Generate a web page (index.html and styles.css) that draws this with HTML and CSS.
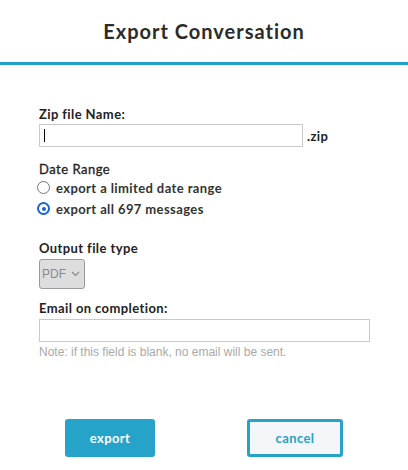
FILE: index.html
```html
<!DOCTYPE html>
<html>
<head>
<meta charset="utf-8">
<link rel="stylesheet" href="styles.css">
</head>
<body>
<div class="dialog">
  <header class="header">
    <h1 class="title">Export Conversation</h1>
  </header>
  <form class="form">
    <div class="field">
      <label class="label">Zip file Name:</label>
      <div class="zip-row">
        <div class="input zip-input"><span class="caret"></span></div>
        <span class="suffix">.zip</span>
      </div>
    </div>
    <div class="field date">
      <div class="label light">Date Range</div>
      <label class="radio-row"><span class="radio"></span>export a limited date range</label>
      <label class="radio-row"><span class="radio checked"></span>export all 697 messages</label>
    </div>
    <div class="field output">
      <div class="label">Output file type</div>
      <div class="select">
        <span>PDF</span>
        <svg class="chev" width="9" height="6" viewBox="0 0 9 6"><path d="M1 1 L4.5 4.5 L8 1" fill="none" stroke="#888" stroke-width="1.2"/></svg>
      </div>
    </div>
    <div class="field email">
      <div class="label">Email on completion:</div>
      <div class="input email-input"></div>
      <div class="note">Note: if this field is blank, no email will be sent.</div>
    </div>
  </form>
  <div class="actions">
    <button class="btn primary">export</button>
    <button class="btn secondary">cancel</button>
  </div>
</div>
</body>
</html>
```

FILE: styles.css
```css
html, body {
  margin: 0;
  padding: 0;
  background: #fff;
}
body {
  font-family: Lato, "Liberation Sans", sans-serif;
  color: #333;
  width: 408px;
  height: 470px;
  overflow: hidden;
}
.header {
  height: 62px;
  border-bottom: 3px solid #20a1cd;
  display: flex;
  align-items: center;
  justify-content: center;
}
.title {
  margin: 0;
  font-size: 20px;
  font-weight: 700;
  letter-spacing: 1px;
  color: #2b2b2b;
}
.form {
  padding: 38px 0 0 39px;
}
.label {
  font-size: 13px;
  font-weight: 700;
  letter-spacing: 0.4px;
  line-height: 16px;
  color: #222;
}
.label.light {
  font-weight: 400;
  letter-spacing: 0.5px;
  color: #222;
  -webkit-text-stroke: 0.3px #222;
}
.zip-row {
  display: flex;
  align-items: center;
  margin-top: 2px;
}
.input {
  box-sizing: border-box;
  border: 1px solid #c9c9c9;
  background: #fff;
  height: 23px;
}
.zip-input {
  width: 264px;
  display: flex;
  align-items: center;
  padding-left: 4px;
}
.caret {
  width: 1px;
  height: 13px;
  background: #000;
}
.suffix {
  margin-left: 4px;
  font-size: 13px;
  font-weight: 700;
  letter-spacing: 0.4px;
  color: #222;
}
.date {
  margin-top: 14px;
}
.radio-row {
  display: flex;
  align-items: center;
  font-size: 13px;
  font-weight: 700;
  letter-spacing: 0.4px;
  color: #333;
  height: 21px;
  margin-left: -2px;
}
.radio {
  box-sizing: border-box;
  width: 13px;
  height: 13px;
  border: 1px solid #777;
  border-radius: 50%;
  margin-right: 6px;
  position: relative;
}
.radio.checked {
  border: 2px solid #1565d8;
}
.radio.checked::after {
  content: "";
  position: absolute;
  left: 2.5px;
  top: 2.5px;
  width: 4px;
  height: 4px;
  border-radius: 50%;
  background: #1565d8;
}
.output {
  margin-top: 21px;
}
.select {
  box-sizing: border-box;
  margin-top: 3px;
  width: 46px;
  height: 30px;
  background: #dddddd;
  border: 1px solid #9a9a9a;
  border-radius: 3px;
  display: flex;
  align-items: center;
  padding-left: 2px;
  font-family: "Liberation Sans", Arial, sans-serif;
  font-size: 12px;
  color: #8a8a8a;
}
.chev {
  margin-left: 5px;
}
.email {
  margin-top: 11px;
}
.email-input {
  width: 331px;
  margin-top: 3px;
}
.note {
  font-family: "Liberation Sans", Arial, sans-serif;
  font-size: 12px;
  line-height: 14px;
  color: #a9a9a9;
  margin-top: 3px;
}
.actions {
  display: flex;
  padding: 60px 0 0 65px;
  gap: 92px;
}
.btn {
  box-sizing: border-box;
  height: 38px;
  border-radius: 3px;
  font-family: Lato, "Liberation Sans", sans-serif;
  font-size: 13px;
  font-weight: 700;
  letter-spacing: 0.4px;
  cursor: pointer;
}
.btn.primary {
  width: 90px;
  background: #25a3c9;
  border: none;
  color: #fff;
}
.btn.secondary {
  width: 96px;
  background: #f4f6fa;
  border: 3px solid #25a3c9;
  color: #25a3c9;
}
```
